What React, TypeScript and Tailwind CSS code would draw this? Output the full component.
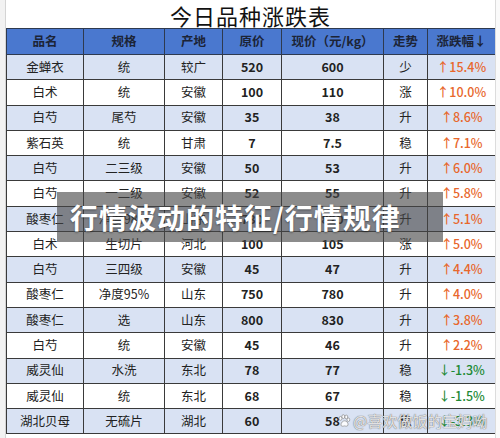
const rows = [
  ['金蝉衣', '统', '较广', '520', '600', '少', '↑15.4%'],
  ['白术', '统', '安徽', '100', '110', '涨', '↑10.0%'],
  ['白芍', '尾芍', '安徽', '35', '38', '升', '↑8.6%'],
  ['紫石英', '统', '甘肃', '7', '7.5', '稳', '↑7.1%'],
  ['白芍', '二三级', '安徽', '50', '53', '升', '↑6.0%'],
  ['白芍', '一二级', '安徽', '52', '55', '升', '↑5.8%'],
  ['酸枣仁', '净度98%', '山东', '780', '820', '升', '↑5.1%'],
  ['白术', '生切片', '河北', '100', '105', '涨', '↑5.0%'],
  ['白芍', '三四级', '安徽', '45', '47', '升', '↑4.4%'],
  ['酸枣仁', '净度95%', '山东', '750', '780', '升', '↑4.0%'],
  ['酸枣仁', '选', '山东', '800', '830', '升', '↑3.8%'],
  ['白芍', '统', '安徽', '45', '46', '升', '↑2.2%'],
  ['威灵仙', '水洗', '东北', '78', '77', '稳', '↓-1.3%'],
  ['威灵仙', '统', '东北', '68', '67', '稳', '↓-1.5%'],
  ['湖北贝母', '无硫片', '湖北', '60', '58', '稳', '↓-3.3%'],
];

const headers = ['品名', '规格', '产地', '原价', '现价（元/kg）', '走势', '涨跌幅↓'];
const widths = ['w-[77px]', 'w-[81px]', 'w-[58px]', 'w-[59px]', 'w-[102px]', 'w-[44px]', 'w-[68px]'];

const font = { fontFamily: '"Noto Sans CJK SC", "Liberation Sans", sans-serif' };

function Paw() {
  return (
    <svg width="14" height="14" viewBox="0 0 16 16" className="shrink-0">
      <g fill="rgba(255,255,255,0.85)" stroke="#8a8a8a" strokeWidth="0.8">
        <ellipse cx="4" cy="5" rx="1.7" ry="2.2" />
        <ellipse cx="7.2" cy="3" rx="1.7" ry="2.2" />
        <ellipse cx="10.6" cy="3.4" rx="1.7" ry="2.2" />
        <ellipse cx="13" cy="6.6" rx="1.6" ry="2" />
        <path d="M4.5 12.5 C4.5 9.5 7 7.8 8.8 7.8 C11 7.8 12.8 10 12.6 12.4 C12.4 14.4 10 14 8.6 13.6 C7 14 4.5 14.5 4.5 12.5 Z" />
      </g>
    </svg>
  );
}

export default function App() {
  return (
    <div className="relative w-[500px] h-[438px] overflow-hidden bg-white" style={font}>
      <div className="flex h-full">
        <div className="w-[6px] bg-[#f2f2f2] border-r border-[#d4d4d4]" />
        <div className="flex flex-col w-[489px]">
          <div className="h-[28px] flex items-center justify-center text-[22px] leading-none font-normal text-[#111] tracking-[1px] pt-[1px]">
            今日品种涨跌表
          </div>
          <table className="border-collapse table-fixed w-[489px]">
            <thead>
              <tr className="h-[26px] bg-[#4a78cf]">
                {headers.map((h, i) => (
                  <th
                    key={h}
                    className={`${widths[i]} border border-[#2e3a4f] text-[12.5px] font-bold text-[#1c2436] text-center p-0`}
                  >
                    {h}
                  </th>
                ))}
              </tr>
            </thead>
            <tbody>
              {rows.map((r, ri) => (
                <tr key={ri} className={`h-[25.3px] ${ri % 2 === 0 ? 'bg-[#d9e2f3]' : 'bg-white'}`}>
                  {r.map((c, ci) => (
                    <td
                      key={ci}
                      className={`border border-[#3a3a3a] text-center p-0 text-[12.5px] ${
                        ci === 6
                          ? c.startsWith('↓')
                            ? 'text-[#1e8a35] font-medium'
                            : 'text-[#e8672c] font-medium'
                          : ci === 3 || ci === 4
                          ? 'text-[#222] font-semibold'
                          : 'text-[#222]'
                      }`}
                    >
                      {c}
                    </td>
                  ))}
                </tr>
              ))}
            </tbody>
          </table>
        </div>
        <div className="flex-1 bg-[#fafafa] border-l border-[#dcdcdc]" />
      </div>

      <div className="absolute left-[57px] top-[192px] w-[386px] h-[50px] bg-[rgba(70,70,70,0.62)] flex items-center pl-[13px]">
        <span
          className="text-white text-[28px] font-bold tracking-[1px] leading-none"
          style={{ textShadow: '0 1px 2px rgba(0,0,0,0.4)' }}
        >
          行情波动的特征/行情规律
        </span>
      </div>

      <div className="absolute left-[337px] top-[413px] flex items-center gap-[2px]">
        <Paw />
        <span
          className="text-[15px] text-[rgba(255,255,255,0.8)] leading-none"
          style={{ textShadow: '0 0 1px #777, 0 0 1px #777' }}
        >
          @喜欢做饭的宝妈呦
        </span>
      </div>
    </div>
  );
}
